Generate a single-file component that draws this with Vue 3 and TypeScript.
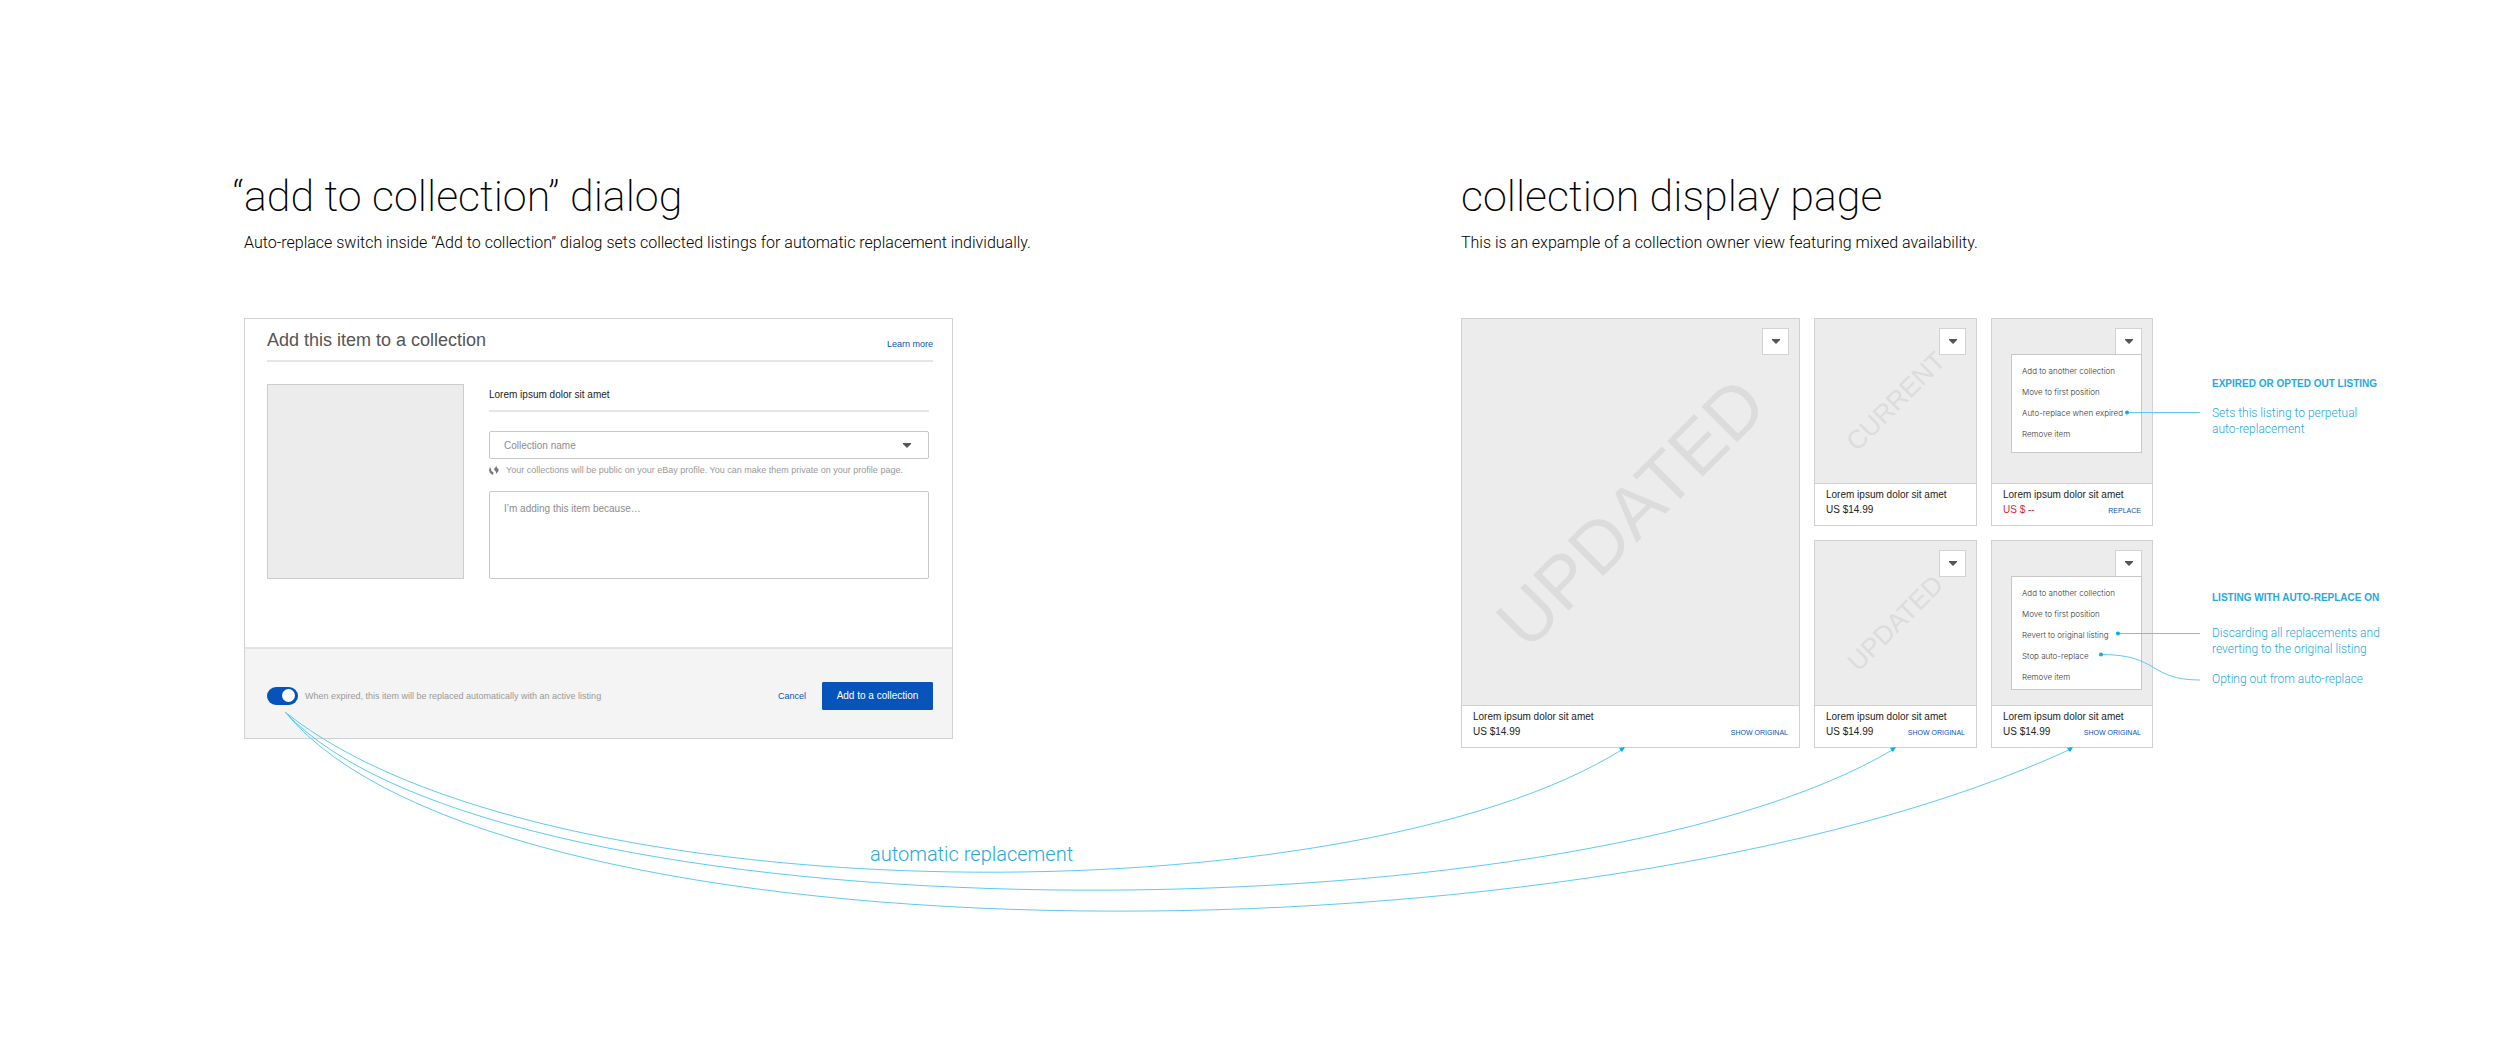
<script setup lang="ts">
import { ref } from 'vue'

interface Listing {
  id: string
  size: 'large' | 'small'
  price: string
  expired?: boolean
  action?: string
  watermark?: string
  menu?: string[]
}

const title = 'Lorem ipsum dolor sit amet'

const listings: Listing[] = [
  { id: 'featured', size: 'large', price: 'US $14.99', action: 'Show original', watermark: 'UPDATED' },
  { id: 'current', size: 'small', price: 'US $14.99', watermark: 'CURRENT' },
  {
    id: 'expired',
    size: 'small',
    price: 'US $ --',
    expired: true,
    action: 'Replace',
    menu: ['Add to another collection', 'Move to first position', 'Auto-replace when expired', 'Remove item'],
  },
  { id: 'updated', size: 'small', price: 'US $14.99', action: 'Show original', watermark: 'UPDATED' },
  {
    id: 'auto',
    size: 'small',
    price: 'US $14.99',
    action: 'Show original',
    menu: [
      'Add to another collection',
      'Move to first position',
      'Revert to original listing',
      'Stop auto-replace',
      'Remove item',
    ],
  },
]

const autoReplace = ref(true)
const collection = ref('')
const reason = ref('')

const flows: string[] = [
  'M285 712 C543 919 1353 919 1623 749',
  'M285 712 C500 943 1570 943 1894 749',
  'M285 712 C498 971 1590 971 2071 749',
]

const arrowTips: string[] = [
  'M1625 747 L1619 748 L1622 752 Z',
  'M1896 747 L1890 748 L1893 752 Z',
  'M2073 747 L2067 748 L2070 752 Z',
]

const callouts: { x: number; y: number; path: string }[] = [
  { x: 2127, y: 412.5, path: 'M2127 412.5 H2200' },
  { x: 2118, y: 633.5, path: 'M2118 633.5 H2200' },
  { x: 2101, y: 654.5, path: 'M2101 654.5 C2160 654.5 2148 680 2200 680' },
]
</script>

<template>
  <main class="board">
    <header class="intro intro-dialog">
      <h1><span class="quote">“</span>add to collection” dialog</h1>
      <p>
        Auto-replace switch inside “Add to collection” dialog sets collected listings for automatic
        replacement individually.
      </p>
    </header>
    <header class="intro intro-page">
      <h1>collection display page</h1>
      <p>This is an expample of a collection owner view featuring mixed availability.</p>
    </header>

    <form class="dialog" @submit.prevent>
      <div class="dialog-body">
        <div class="dialog-head">
          <h2>Add this item to a collection</h2>
          <a class="link" href="#learn">Learn more</a>
        </div>
        <div class="dialog-main">
          <div class="thumb"></div>
          <div class="fields">
            <h3>{{ title }}</h3>
            <div class="select-wrap">
              <select v-model="collection" aria-label="Collection name">
                <option value="">Collection name</option>
              </select>
              <svg class="caret" viewBox="0 0 8 5" aria-hidden="true"><path d="M0 0H8V1L4 5L0 1Z" /></svg>
            </div>
            <p class="hint">
              <svg class="globe" viewBox="0 0 10 9" aria-hidden="true">
                <path d="M1 1 L0 4 L1 7 L4 9 L4.500 6.500 L2.500 5 L2 3 Z" />
                <path d="M7.500 0 L5 3 L6 5 L7 5.500 L7 8 L9.500 5 L9.500 3 L8 2 Z" />
              </svg>
              Your collections will be public on your eBay profile. You can make them private on your
              profile page.
            </p>
            <textarea v-model="reason" aria-label="Reason" placeholder="I’m adding this item because…"></textarea>
          </div>
        </div>
      </div>
      <div class="dialog-foot">
        <label class="switch">
          <input v-model="autoReplace" type="checkbox" role="switch" />
          <span>When expired, this item will be replaced automatically with an active listing</span>
        </label>
        <div class="actions">
          <a class="link" href="#cancel">Cancel</a>
          <button class="primary" type="submit">Add to a collection</button>
        </div>
      </div>
    </form>

    <section class="gallery">
      <article v-for="item in listings" :key="item.id" class="card" :class="item.size">
        <div class="picture">
          <span v-if="item.watermark" class="watermark">{{ item.watermark }}</span>
          <div class="options">
            <button class="toggle" type="button" aria-label="Listing options">
              <svg class="caret" viewBox="0 0 8 5" aria-hidden="true"><path d="M0 0H8V1L4 5L0 1Z" /></svg>
            </button>
            <ul v-if="item.menu" class="menu">
              <li v-for="entry in item.menu" :key="entry">
                <button type="button">{{ entry }}</button>
              </li>
            </ul>
          </div>
        </div>
        <div class="caption">
          <h3>{{ title }}</h3>
          <div class="price-row">
            <span :class="{ expired: item.expired }">{{ item.price }}</span>
            <a v-if="item.action" class="action" :href="'#' + item.id">{{ item.action }}</a>
          </div>
        </div>
      </article>
    </section>

    <aside class="notes">
      <section>
        <h4>EXPIRED OR OPTED OUT LISTING</h4>
        <p>Sets this listing to perpetual<br />auto-replacement</p>
      </section>
      <section>
        <h4>LISTING WITH AUTO-REPLACE ON</h4>
        <p>Discarding all replacements and<br />reverting to the original listing</p>
        <p>Opting out from auto-replace</p>
      </section>
    </aside>

    <svg class="overlay" viewBox="0 0 2500 1052" preserveAspectRatio="none" aria-hidden="true">
      <path v-for="d in flows" :key="d" class="line" :d="d" />
      <path v-for="d in arrowTips" :key="d" class="tip" :d="d" />
      <template v-for="c in callouts" :key="c.path">
        <path class="line" :d="c.path" />
        <circle class="tip" :cx="c.x" :cy="c.y" r="2" />
      </template>
    </svg>
    <p class="flow-label">automatic replacement</p>
  </main>
</template>

<style>
body {
  margin: 0;
  background: #fff;
}
</style>

<style scoped>
* {
  box-sizing: border-box;
}

h1,
h2,
h3,
h4,
p,
ul {
  margin: 0;
  padding: 0;
  font-weight: 400;
}

button,
select,
textarea,
input {
  margin: 0;
  font-family: inherit;
}

a {
  text-decoration: none;
}

.board {
  position: relative;
  display: grid;
  grid-template-columns: 244fr 709fr 508fr 692fr 59fr 288fr;
  row-gap: 64px;
  min-height: 1052px;
  align-content: start;
  align-items: start;
  padding-top: 168px;
  font-family: "Liberation Sans", Arial, sans-serif;
  color: #333;
}

/* Section headings */
.intro {
  font-family: Roboto, "Liberation Sans", sans-serif;
  color: #000;
  white-space: nowrap;
}

.intro-dialog {
  grid-column: 2 / 4;
}

.intro-page {
  grid-column: 4 / 7;
}

.intro h1 {
  font-size: 43px;
  font-weight: 200;
  line-height: 56px;
}

.quote {
  display: inline-block;
  width: 0;
  direction: rtl;
}

.intro p {
  margin-top: 8px;
  font-size: 16px;
  font-weight: 300;
  line-height: 22px;
}

/* Dialog */
.dialog {
  grid-column: 2;
  display: flex;
  flex-direction: column;
  border: 1px solid #d2d2d2;
}

.dialog-body {
  padding: 10px 19px 68px 22px;
}

.dialog-head {
  display: flex;
  align-items: flex-end;
  justify-content: space-between;
  padding-bottom: 9px;
  border-bottom: 2px solid #e6e6e6;
}

.dialog-head h2 {
  font-size: 18px;
  line-height: 22px;
  color: #555;
}

.link {
  font-size: 9px;
  line-height: 14px;
  color: #0654ba;
}

.dialog-main {
  display: flex;
  gap: 25px;
  padding: 22px 4px 0 0;
}

.thumb {
  width: 197px;
  height: 195px;
  background: #ececec;
  border: 1px solid #ccc;
}

.fields {
  flex: 1;
  display: flex;
  flex-direction: column;
}

.fields h3 {
  padding: 4px 0 8px;
  font-size: 10px;
  line-height: 14px;
  border-bottom: 2px solid #e6e6e6;
  color: #222;
}

.select-wrap {
  position: relative;
  height: 28px;
  margin-top: 19px;
}

.select-wrap select {
  width: 100%;
  height: 100%;
  padding: 0 14px;
  border: 1px solid #c8c8c8;
  border-radius: 2px;
  background: #fff;
  font-size: 10px;
  color: #8c8c8c;
  appearance: none;
}

.caret {
  width: 8px;
  height: 5px;
  fill: #555;
}

.select-wrap .caret {
  position: absolute;
  top: 12px;
  right: 18px;
}

.hint {
  display: flex;
  align-items: center;
  gap: 7px;
  margin: 4px 0 14px;
  font-size: 9px;
  line-height: 14px;
  white-space: nowrap;
  color: #999;
}

.globe {
  width: 10px;
  height: 9px;
  fill: #777;
}

.fields textarea {
  flex: 1;
  padding: 10px 14px;
  border: 1px solid #c8c8c8;
  border-radius: 2px;
  font-size: 10px;
  line-height: 14px;
  color: #333;
  resize: none;
}

.fields textarea::placeholder {
  color: #8c8c8c;
}

.dialog-foot {
  display: flex;
  align-items: center;
  justify-content: space-between;
  height: 91px;
  padding: 4px 19px 0 22px;
  border-top: 2px solid #e2e2e2;
  background: #f4f4f4;
}

.switch {
  display: flex;
  align-items: center;
  gap: 7px;
  font-size: 9px;
  line-height: 14px;
  color: #999;
}

.switch input {
  display: flex;
  align-items: center;
  width: 31px;
  height: 18px;
  padding: 0 3px;
  border-radius: 9px;
  background: #aaa;
  appearance: none;
}

.switch input::before {
  content: "";
  width: 13px;
  height: 13px;
  border-radius: 50%;
  background: #fff;
}

.switch input:checked {
  justify-content: flex-end;
  background: #0654ba;
}

.actions {
  display: flex;
  align-items: center;
  gap: 16px;
}

.primary {
  width: 111px;
  height: 28px;
  padding: 0;
  border: 1px solid #0654ba;
  border-radius: 1px;
  background: #0654ba;
  font-size: 10px;
  color: #fff;
}

/* Collection gallery */
.gallery {
  grid-column: 4;
  display: grid;
  grid-template-columns: minmax(0, 339fr) minmax(0, 163fr) minmax(0, 162fr);
  gap: 14px;
}

.card {
  display: flex;
  flex-direction: column;
  border: 1px solid #d0d0d0;
}

.card.large {
  grid-row: span 2;
}

.picture {
  position: relative;
  flex: 1;
  display: flex;
  align-items: center;
  justify-content: center;
  min-height: 164px;
  background: #ececec;
}

.watermark {
  font-size: 26px;
  line-height: 1;
  color: #dcdcdc;
  transform: rotate(-45deg);
}

.large .watermark {
  font-size: 73px;
}

.options {
  position: absolute;
  top: 9px;
  right: 10px;
  display: flex;
  flex-direction: column;
  align-items: flex-end;
}

.toggle {
  display: flex;
  align-items: center;
  justify-content: center;
  width: 27px;
  height: 27px;
  padding: 0;
  border: 1px solid #d2d2d2;
  background: #fff;
}

.menu {
  width: 131px;
  min-height: 99px;
  margin-top: -1px;
  padding: 5px 10px 2px;
  border: 1px solid #c8c8c8;
  background: #fff;
  list-style: none;
}

.menu button {
  display: block;
  height: 21px;
  padding: 0;
  border: 0;
  background: none;
  font-family: Inter, "Liberation Sans", sans-serif;
  font-size: 8px;
  font-weight: 300;
  color: #333;
  white-space: nowrap;
}

.caption {
  padding: 3px 11px 8px;
  border-top: 1px solid #d0d0d0;
  background: #fff;
  font-size: 10px;
  line-height: 15px;
  color: #222;
}

.caption h3 {
  font-size: 10px;
  white-space: nowrap;
}

.price-row {
  display: flex;
  align-items: baseline;
  justify-content: space-between;
  height: 15px;
}

.expired {
  color: #dd1e31;
}

.action {
  font-size: 7px;
  color: #0654ba;
  text-transform: uppercase;
}

/* Side notes */
.notes {
  grid-column: 6;
  display: grid;
  grid-template-rows: 208px 1fr;
  row-gap: 14px;
  color: #25a9e0;
}

.notes section {
  padding-top: 59px;
}

.notes section + section {
  padding-top: 51px;
}

.notes h4 {
  font-size: 10px;
  font-weight: 700;
  line-height: 14px;
}

.notes p {
  margin-top: 14px;
  font-family: Roboto, "Liberation Sans", sans-serif;
  font-size: 12px;
  font-weight: 300;
  line-height: 16px;
}

.notes section + section p:nth-of-type(1) {
  margin-top: 20px;
}

/* Arrows between the dialog and the gallery */
.overlay {
  position: absolute;
  top: 0;
  left: 0;
  width: 100%;
  height: 1052px;
  pointer-events: none;
}

.line {
  fill: none;
  stroke: #5ccaf5;
  stroke-width: 1px;
}

.tip {
  fill: #00aeef;
}

.flow-label {
  position: absolute;
  top: 842px;
  left: 0;
  width: 100%;
  padding-left: 870px;
  font-family: Roboto, "Liberation Sans", sans-serif;
  font-size: 20px;
  font-weight: 300;
  line-height: 24px;
  color: #25a9e0;
}
</style>
